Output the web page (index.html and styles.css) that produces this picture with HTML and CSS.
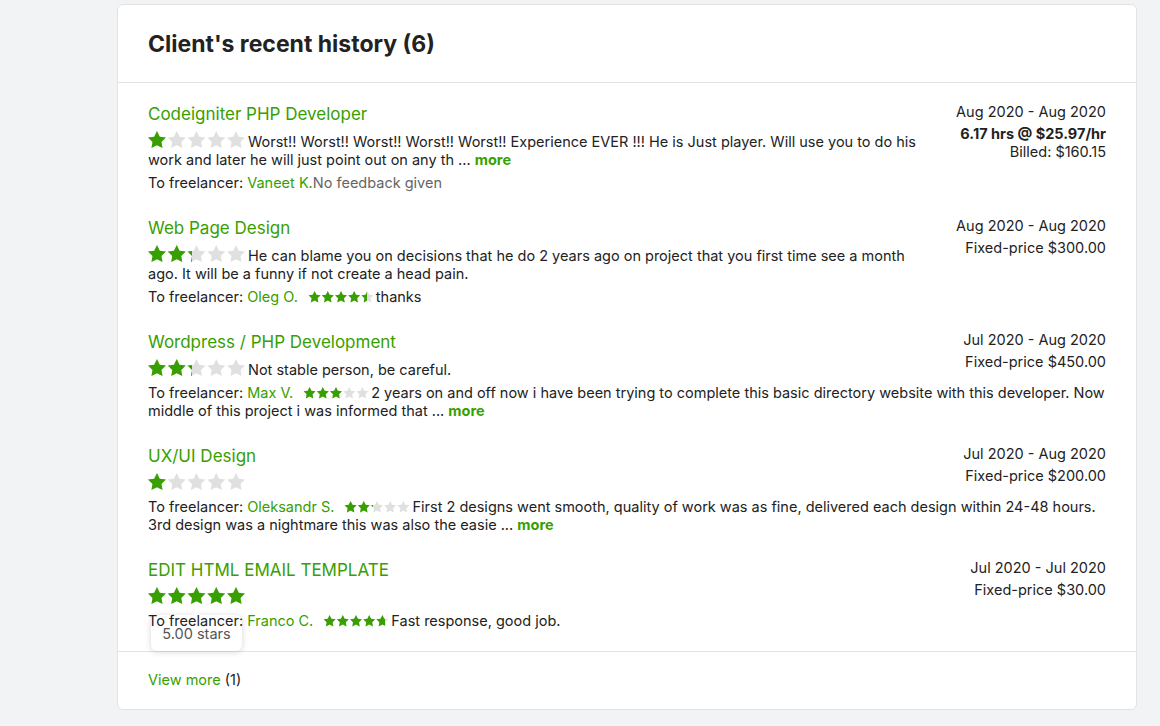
FILE: index.html
```html
<!doctype html>
<html>
<head>
<meta charset="utf-8">
<title>Client's recent history</title>
<link rel="stylesheet" href="styles.css">
</head>
<body>
<svg class="defs" aria-hidden="true">
  <defs>
    <path id="st" d="M12 2l3.09 6.26L22 9.27l-5 4.87 1.18 6.88L12 17.77l-6.18 3.25L7 14.14 2 9.27l6.91-1.01L12 2z" transform="translate(-2 -2)"/>
    <symbol id="five" viewBox="0 0 108 20">
      <use href="#st" x="0"/>
      <use href="#st" x="22"/>
      <use href="#st" x="44"/>
      <use href="#st" x="66"/>
      <use href="#st" x="88"/>
    </symbol>
  </defs>
</svg>

<div class="page">
  <div class="card">
    <div class="card-head">
      <h2>Client's recent history (6)</h2>
    </div>

    <div class="history">
      <div class="job">
        <div class="job-top">
          <div class="job-main">
            <a class="job-title" href="#">Codeigniter PHP Developer</a>
            <div class="job-desc">
              <span class="stars lg"><svg><use href="#five"/></svg><span class="fill" style="width:19px"><svg><use href="#five"/></svg></span></span>Worst!! Worst!! Worst!! Worst!! Worst!! Experience EVER !!! He is Just player. Will use you to do his work and later he will just point out on any th ... <a class="more" href="#">more</a>
            </div>
          </div>
          <div class="job-side">
            <div>Aug 2020 - Aug 2020</div>
            <div class="terms"><b>6.17 hrs @ $25.97/hr</b></div>
            <div>Billed: $160.15</div>
          </div>
        </div>
        <div class="to-freelancer">To freelancer: <a class="name" href="#">Vaneet K.</a><span class="muted">No feedback given</span></div>
      </div>

      <div class="job">
        <div class="job-top">
          <div class="job-main">
            <a class="job-title" href="#">Web Page Design</a>
            <div class="job-desc">
              <span class="stars lg"><svg><use href="#five"/></svg><span class="fill" style="width:44px"><svg><use href="#five"/></svg></span></span>He can blame you on decisions that he do 2 years ago on project that you first time see a month ago. It will be a funny if not create a head pain.
            </div>
          </div>
          <div class="job-side">
            <div>Aug 2020 - Aug 2020</div>
            <div class="terms">Fixed-price $300.00</div>
          </div>
        </div>
        <div class="to-freelancer">To freelancer: <a class="name" href="#">Oleg O.</a><span class="stars sm"><svg><use href="#five"/></svg><span class="fill" style="width:59px"><svg><use href="#five"/></svg></span></span>thanks</div>
      </div>

      <div class="job">
        <div class="job-top">
          <div class="job-main">
            <a class="job-title" href="#">Wordpress / PHP Development</a>
            <div class="job-desc">
              <span class="stars lg"><svg><use href="#five"/></svg><span class="fill" style="width:44px"><svg><use href="#five"/></svg></span></span>Not stable person, be careful.
            </div>
          </div>
          <div class="job-side">
            <div>Jul 2020 - Aug 2020</div>
            <div class="terms">Fixed-price $450.00</div>
          </div>
        </div>
        <div class="to-freelancer">To freelancer: <a class="name" href="#">Max V.</a><span class="stars sm"><svg><use href="#five"/></svg><span class="fill" style="width:39px"><svg><use href="#five"/></svg></span></span>2 years on and off now i have been trying to complete this basic directory website with this developer. Now middle of this project i was informed that ... <a class="more" href="#">more</a></div>
      </div>

      <div class="job">
        <div class="job-top">
          <div class="job-main">
            <a class="job-title" href="#">UX/UI Design</a>
            <div class="job-desc">
              <span class="stars lg"><svg><use href="#five"/></svg><span class="fill" style="width:19px"><svg><use href="#five"/></svg></span></span>
            </div>
          </div>
          <div class="job-side">
            <div>Jul 2020 - Aug 2020</div>
            <div class="terms">Fixed-price $200.00</div>
          </div>
        </div>
        <div class="to-freelancer">To freelancer: <a class="name" href="#">Oleksandr S.</a><span class="stars sm"><svg><use href="#five"/></svg><span class="fill" style="width:29px"><svg><use href="#five"/></svg></span></span>First 2 designs went smooth, quality of work was as fine, delivered each design within 24-48 hours. 3rd design was a nightmare this was also the easie ... <a class="more" href="#">more</a></div>
      </div>

      <div class="job">
        <div class="job-top">
          <div class="job-main">
            <a class="job-title" href="#">EDIT HTML EMAIL TEMPLATE</a>
            <div class="job-desc">
              <span class="stars lg"><svg><use href="#five"/></svg><span class="fill" style="width:100%"><svg><use href="#five"/></svg></span></span>
              <div class="tip">5.00 stars</div>
            </div>
          </div>
          <div class="job-side">
            <div>Jul 2020 - Jul 2020</div>
            <div class="terms">Fixed-price $30.00</div>
          </div>
        </div>
        <div class="to-freelancer">To freelancer: <a class="name" href="#">Franco C.</a><span class="stars sm"><svg><use href="#five"/></svg><span class="fill" style="width:62px"><svg><use href="#five"/></svg></span></span>Fast response, good job.</div>
      </div>
    </div>

    <div class="card-foot">
      <a class="view-more" href="#">View more</a> (1)
    </div>
  </div>
</div>
</body>
</html>
```
FILE: styles.css
```css
*{ box-sizing:border-box;}
body{ margin:0; background:#f2f3f5; font-family:Inter,"Noto Sans",sans-serif; font-size:14.5px; line-height:18px; color:#222;}
a{ color:#37a000; text-decoration:none;}
.defs{ position:absolute; width:0; height:0; overflow:hidden;}

.page{ padding:4px 0 0 117px;}
.card{ width:1020px; background:#fff; border:1px solid #e2e3e5; border-radius:6px;}
.card-head{ padding:25px 30px 24px; border-bottom:1px solid #e2e3e5;}
.card-head h2{ margin:0; font-size:23px; line-height:28px; font-weight:700; color:#222;}

.history{ display:flex; flex-direction:column; gap:25px; padding:20px 30px 21px;}
.job-top{ display:flex; gap:8px;}
.job-main{ flex:1; min-width:0;}
.job-title{ display:block; font-size:17px; line-height:22px;}
.job-desc{ position:relative; margin-top:8px;}
.job-side{ flex:0 0 170px; text-align:right; white-space:nowrap;}
.job-side .terms{ margin-top:4px;}
.job-side b{ font-weight:700;}
.to-freelancer{ position:relative; margin-top:5px;}
.more{ font-weight:700;}
.muted{ color:#656565;}

.stars{ position:relative; display:inline-block;}
.stars svg{ display:block; fill:#e0e0e0;}
.stars .fill{ position:absolute; left:0; top:0; height:100%; overflow:hidden;}
.stars .fill svg{ fill:#37a000;}
.stars.lg{ width:97px; height:18px; margin:-2px 3px 0 0; vertical-align:-2px;}
.stars.lg svg{ width:97px; height:18px;}
.stars.sm{ width:66px; height:12px; margin:0 2px 0 10px; vertical-align:-1px;}
.stars.sm svg{ width:66px; height:12px;}

.tip{ position:absolute; left:3px; top:26px; width:91px; height:36px; padding:10px 0 0; background:#fff; border-radius:6px; box-shadow:0 1px 6px rgba(0,0,0,.16); text-align:center; color:#555;}
.tip:before{ content:''; position:absolute; left:42px; top:-3px; width:7px; height:7px; background:#fff; transform:rotate(45deg);}

.card-foot{ padding:19px 30px 20px; border-top:1px solid #e2e3e5;}
```
